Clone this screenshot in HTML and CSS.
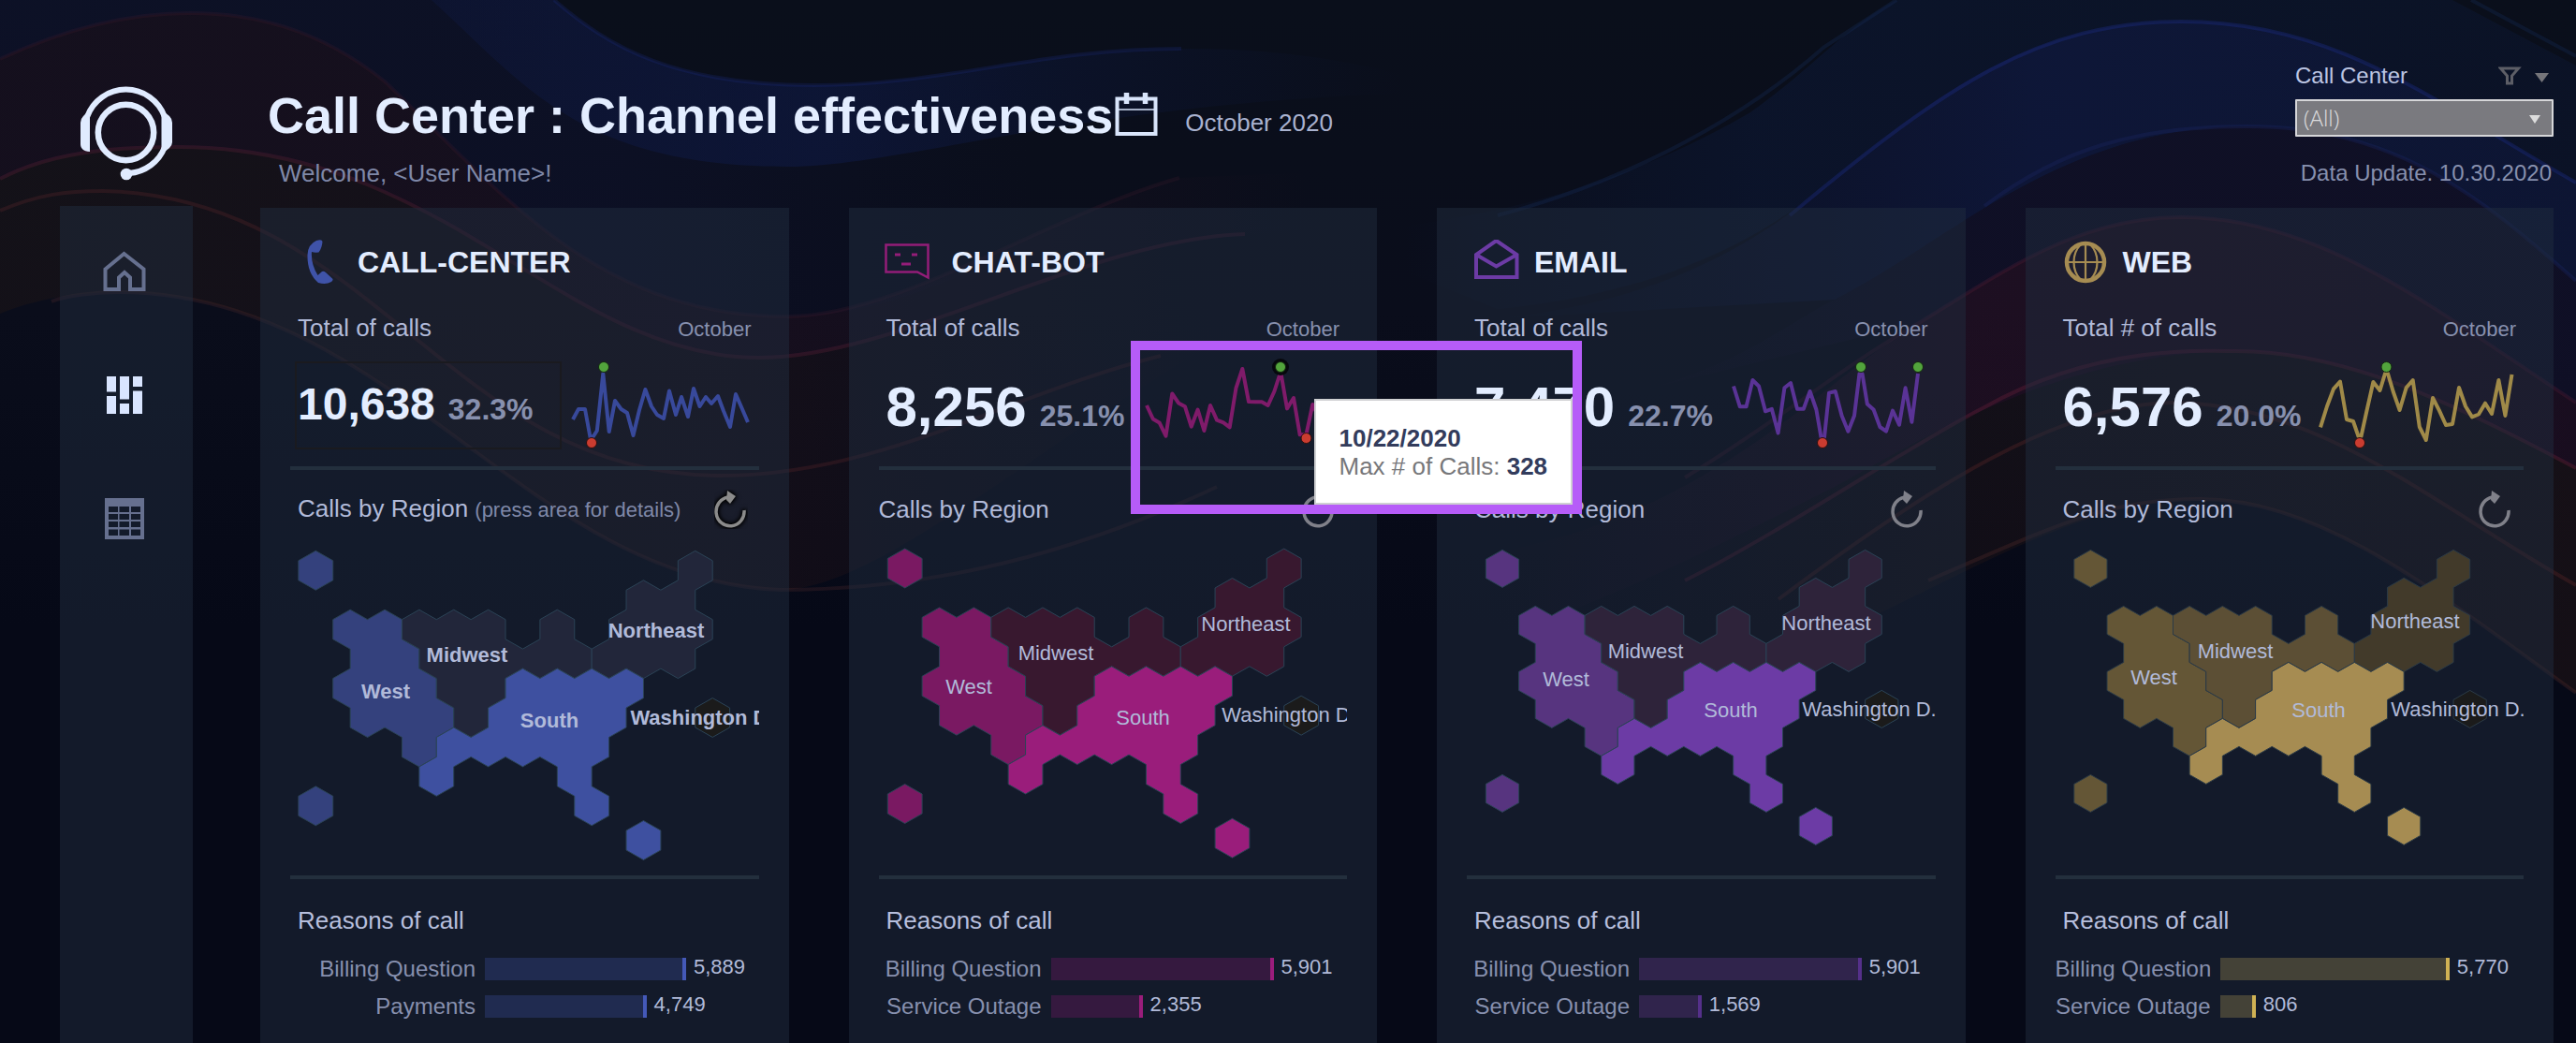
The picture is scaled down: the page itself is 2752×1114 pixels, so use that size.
FILE: index.html
```html
<!DOCTYPE html>
<html lang="en">
<head>
<meta charset="utf-8">
<title>Call Center : Channel effectiveness</title>
<link rel="stylesheet" href="styles.css">
</head>
<body>

<svg class="backdrop" viewBox="0 0 2752 1114" preserveAspectRatio="none" aria-hidden="true">
  <defs>
    <linearGradient id="fadeBlue" gradientUnits="userSpaceOnUse" x1="461" x2="1500" y1="0" y2="0"><stop offset="0" stop-color="#10205c" stop-opacity=".2"/><stop offset=".4" stop-color="#10205c" stop-opacity=".35"/><stop offset="1" stop-color="#10205c" stop-opacity="0"/></linearGradient>
    <linearGradient id="fadeNavy" gradientUnits="userSpaceOnUse" x1="1500" x2="2752" y1="0" y2="0"><stop offset="0" stop-color="#0d1c40" stop-opacity="0"/><stop offset=".3" stop-color="#0d1c40" stop-opacity=".4"/><stop offset="1" stop-color="#0d1c40" stop-opacity=".3"/></linearGradient>
    <linearGradient id="crest" gradientUnits="userSpaceOnUse" x1="1600" x2="2752" y1="0" y2="0"><stop offset="0" stop-color="#13235f" stop-opacity="0"/><stop offset=".5" stop-color="#13205a" stop-opacity=".45"/><stop offset="1" stop-color="#13235f" stop-opacity=".35"/></linearGradient>
    <linearGradient id="dusk" gradientUnits="userSpaceOnUse" x1="1700" x2="2752" y1="0" y2="0"><stop offset="0" stop-color="#151230" stop-opacity="0"/><stop offset=".4" stop-color="#151230" stop-opacity=".5"/><stop offset="1" stop-color="#151230" stop-opacity=".5"/></linearGradient>
    <linearGradient id="wineLeft" gradientUnits="userSpaceOnUse" x1="0" x2="1400" y1="0" y2="0"><stop offset="0" stop-color="#3a1426" stop-opacity=".22"/><stop offset=".6" stop-color="#3a1426" stop-opacity=".25"/><stop offset="1" stop-color="#3a1426" stop-opacity="0"/></linearGradient>
    <linearGradient id="wineRight" gradientUnits="userSpaceOnUse" x1="1600" x2="2752" y1="0" y2="0"><stop offset="0" stop-color="#4a1430" stop-opacity="0"/><stop offset=".45" stop-color="#4a1430" stop-opacity=".3"/><stop offset="1" stop-color="#4a1430" stop-opacity=".25"/></linearGradient>
    <linearGradient id="emberLeft" gradientUnits="userSpaceOnUse" x1="0" x2="1300" y1="0" y2="0"><stop offset="0" stop-color="#2a1a12" stop-opacity=".3"/><stop offset=".6" stop-color="#2a1518" stop-opacity=".35"/><stop offset="1" stop-color="#2a1518" stop-opacity="0"/></linearGradient>
    <linearGradient id="emberRight" gradientUnits="userSpaceOnUse" x1="1700" x2="2752" y1="0" y2="0"><stop offset="0" stop-color="#2a1814" stop-opacity="0"/><stop offset=".4" stop-color="#2a1814" stop-opacity=".3"/><stop offset="1" stop-color="#2a1814" stop-opacity=".4"/></linearGradient>
    <linearGradient id="depth" x1="0" y1="0" x2="0" y2="1"><stop offset="0" stop-color="#0a0f1b"/><stop offset=".3" stop-color="#0a0d1b"/><stop offset=".6" stop-color="#060917"/><stop offset="1" stop-color="#060917"/></linearGradient>
    <linearGradient id="veil" gradientUnits="userSpaceOnUse" x1="0" x2="1100" y1="0" y2="0"><stop offset="0" stop-color="#131640" stop-opacity=".3"/><stop offset=".6" stop-color="#131640" stop-opacity=".25"/><stop offset="1" stop-color="#131640" stop-opacity="0"/></linearGradient>
  </defs>
  <rect width="2752" height="1114" fill="url(#depth)"/>
  <path fill="url(#veil)" d="M0 0H592C650 50 720 91 870 91C960 91 1040 76 1100 66V260C1000 310 920 338 842 338C640 338 540 210 411 87C340 30 270 14 203 14C130 14 60 35 0 63Z"/>
  <path fill="url(#fadeBlue)" d="M461 0C560 90 620 178 842 178C960 178 1160 110 1500 100V80C1420 60 1350 52 1262 52C1110 52 1010 91 870 91C720 91 650 50 592 0Z"/>
  <path fill="url(#fadeNavy)" d="M1400 250C1600 240 1750 190 1870 120C1940 70 1970 30 2026 0H2620L2752 70V195C2600 110 2500 23 2330 23C2180 23 2080 90 1960 190C1900 240 1800 310 1600 330Z"/>
  <path fill="url(#crest)" d="M1600 340C1800 320 1900 240 1960 190C2080 90 2180 23 2330 23C2500 23 2600 110 2752 195V300C2650 210 2560 135 2400 135C2200 135 2080 260 1960 320Z"/>
  <path fill="url(#dusk)" d="M1700 430C1850 400 1900 350 1960 320C2080 260 2200 135 2400 135C2560 135 2650 210 2752 300V430C2600 330 2480 232 2330 232C2220 232 2140 290 2050 345Z"/>
  <path fill="url(#wineLeft)" d="M0 63C60 35 130 14 203 14C270 14 340 30 411 87C540 210 640 338 842 338C960 338 1120 230 1260 190L1500 180V258C1440 252 1380 250 1330 250C1160 256 960 382 812 382C600 382 480 157 190 157C110 157 50 165 0 191Z"/>
  <path fill="url(#emberLeft)" d="M0 191C50 165 110 157 190 157C480 157 600 382 812 382C960 382 1160 256 1330 250L1400 320C1200 390 960 630 834 630C560 620 420 312 126 312C90 312 40 318 0 335Z"/>
  <path fill="url(#wineRight)" d="M1500 600C1800 590 1950 400 2050 345C2140 290 2220 232 2330 232C2480 232 2600 330 2752 430V500C2620 430 2500 372 2380 375C2200 380 2050 470 1960 520C1800 600 1650 680 1500 700Z"/>
  <path fill="url(#emberRight)" d="M1500 700C1650 680 1800 600 1960 520C2050 470 2200 380 2380 375C2500 372 2620 430 2752 500V740C2600 630 2480 533 2350 533C2200 533 2050 650 1900 700Z"/>
  <g class="ridges">
    <path d="M592 0C650 50 720 91 870 91C1010 91 1110 52 1262 52" stroke="#1a2c80" stroke-opacity=".25"/>
    <path d="M1600 230C1750 190 1870 120 1949 50L2026 0M2640 0L2752 60" stroke="#17305c" stroke-opacity=".3"/>
    <path d="M1912 230C2080 90 2180 23 2330 23C2500 23 2600 110 2752 195" stroke="#1d2f8c" stroke-opacity=".35"/>
    <path d="M2120 220C2200 160 2280 135 2400 135C2560 135 2650 210 2752 300" stroke="#1b2560" stroke-opacity=".35"/>
    <path d="M0 63C60 35 130 14 203 14C270 14 340 30 411 87C540 210 640 338 842 338C960 338 1120 230 1260 190" stroke="#4a1c34" stroke-opacity=".2"/>
    <path d="M0 191C50 165 110 157 190 157C480 157 600 382 812 382C960 382 1160 256 1330 250" stroke="#5a2036" stroke-opacity=".35"/>
    <path d="M0 225C40 208 70 204 110 204C400 210 480 508 770 508C940 508 1080 420 1240 380" stroke="#6a2c30" stroke-opacity=".25"/>
    <path d="M55 322C70 316 100 312 126 312C420 312 560 620 834 630C1000 630 1150 590 1300 520" stroke="#5a3030" stroke-opacity=".25"/>
    <path d="M1800 510C1900 450 1970 390 2050 345C2140 290 2220 232 2330 232C2480 232 2600 330 2752 430" stroke="#64203c" stroke-opacity=".25"/>
    <path d="M1800 620C1900 570 2050 470 2120 435C2200 390 2290 372 2380 375C2500 372 2620 430 2752 500" stroke="#7a2440" stroke-opacity=".3"/>
    <path d="M1900 640C2060 520 2200 432 2320 430C2480 430 2600 540 2752 625" stroke="#6a2c2c" stroke-opacity=".3"/>
    <path d="M2060 620C2200 560 2250 533 2350 533C2480 533 2600 630 2752 740" stroke="#5a302c" stroke-opacity=".3"/>
  </g>
</svg>

<!-- Region outlines, drawn on a grid of half-hexagon columns and third-of-row steps -->
<svg class="defs" aria-hidden="true">
  <defs>
    <path id="hex" vector-effect="non-scaling-stroke" d="M0-2L1-1V1L0 2L-1 1V-1Z"/>
    <path id="west" vector-effect="non-scaling-stroke" d="M1 5L2 4L3 5L4 4L5 5V7L6 8V10L7 11V13L8 14V16L7 17V19L6 20L5 19V17L4 16L3 17L2 16V14L1 13V11L2 10V8L1 7ZM0-2L1-1V1L0 2L-1 1V-1ZM0 22L1 23V25L0 26L-1 25V23Z"/>
    <path id="midwest" vector-effect="non-scaling-stroke" d="M5 5L6 4L7 5L8 4L9 5L10 4L11 5V7L12 8L13 7V5L14 4L15 5V7L16 8V10L15 11L14 10L13 11L12 10L11 11V13L10 14V16L9 17L8 16V14L7 13V11L6 10V8L5 7Z"/>
    <path id="northeast" vector-effect="non-scaling-stroke" d="M21-1L22-2L23-1V1L22 2V4L23 5V7L22 8V10L21 11L20 10L19 11L18 10L17 11L16 10V8L17 7V5L18 4V2L19 1L20 2L21 1Z"/>
    <path id="south" vector-effect="non-scaling-stroke" d="M11 11L12 10L13 11L14 10L15 11L16 10L17 11L18 10L19 11V13L18 14V16L17 17V19L16 20V22L17 23V25L16 26L15 25V23L14 22V20L13 19L12 20L11 19L10 20L9 19L8 20V22L7 23L6 22V20L7 19V17L8 16L9 17L10 16V14L11 13ZM19 25.5L20 26.5V28.5L19 29.5L18 28.5V26.5Z"/>
    <g id="reload">
      <path d="M15 8A15 15.500 0 1 0 32 22" fill="none" stroke-width="3.500"/>
      <path d="M14 1L23 7L17 15L13 11Z" stroke="none"/>
    </g>
  </defs>
</svg>

<div class="app">
  <header class="topbar">
    <a class="logo" href="#" aria-label="Home page">
      <svg width="120" height="120" viewBox="0 0 120 120" fill="none" stroke="#e0ebff">
        <circle cx="59.500" cy="56.500" r="29.700" stroke-width="6.500"/>
        <path d="M18 40A44 44 0 0 1 101 40M101 72A44 44 0 0 1 63 100" stroke-width="6"/>
        <path d="M21 37V77C14 77 11 73 11 69V46Q11 42 14 39L18 35ZM97.500 37L101 35L106 39Q109 42 109 46V67Q109 70 106 73L101 77L97.500 74Z" fill="#e0ebff" stroke="none"/>
        <circle cx="60" cy="101" r="6.300" fill="#e0ebff" stroke="none"/>
      </svg>
    </a>
    <div class="heading">
      <div class="title-line">
        <h1>Call Center : Channel effectiveness</h1>
        <svg class="calendar" width="46" height="48" viewBox="0 0 46 48" fill="none" stroke="#d9e5fb"><path d="M2.500 6.500H43.500V44H2.500Z" stroke-width="4"/><path d="M1 18H45" stroke-width="1.500"/><path d="M12.500 0V12M32.500 0V12" stroke-width="5.500"/></svg>
        <span class="period">October 2020</span>
      </div>
      <p class="welcome">Welcome, &lt;User Name&gt;!</p>
    </div>
    <div class="filter">
      <div class="filter-head">
        <label for="center">Call Center</label>
        <svg width="54" height="20" viewBox="0 0 54 20"><path d="M2.500 2H21.500L14.500 10V18H9.500V10Z" fill="none" stroke="#5d5e66" stroke-width="3"/><path d="M39 7H54L46.500 17Z" fill="#75757a"/></svg>
      </div>
      <div class="select">
        <select id="center"><option>(All)</option></select>
        <svg width="12" height="9" viewBox="0 0 12 9"><path d="M0 0H12L6 9Z" fill="#dcdcdc"/></svg>
      </div>
      <p class="updated">Data Update. 10.30.2020</p>
    </div>
  </header>

  <nav class="sidebar" aria-label="Views">
    <a href="#" aria-label="Home"><svg width="46" height="44" viewBox="0 0 46 44"><path d="M2.500 19.500L22.500 3L43.500 19.500V41H29V28.500L23 23L17 28.500V41H2.500Z" fill="none" stroke="#66708f" stroke-width="4"/></svg></a>
    <a href="#" aria-label="Channels"><svg width="40" height="40" viewBox="0 0 40 40" fill="#d9e5ff"><path d="M1 0H11V16.500H1ZM1 21H11V40H1ZM15 0H25V24.500H15ZM15 29H25V40H15ZM29 0H39V11H29ZM29 15.500H39V40H29Z"/></svg></a>
    <a href="#" aria-label="Table"><svg width="42" height="44" viewBox="0 0 42 44"><path fill="#66708f" fill-rule="evenodd" d="M0 0H42V44H0ZM4 9V15H14V9ZM15.500 9V15H26V9ZM28 9V15H38V9ZM4 17V23H14V17ZM15.500 17V23H26V17ZM28 17V23H38V17ZM4 25V31H14V25ZM15.500 25V31H26V25ZM28 25V31H38V25ZM4 33.500V40H14V33.500ZM15.500 33.500V40H26V33.500ZM28 33.500V40H38V33.500Z"/></svg></a>
  </nav>

  <main class="cards">
    <section class="card phone">
      <div class="card-head">
        <span class="icon"><svg width="28" height="48" viewBox="0 0 28 48" fill="#3f53a8"><path d="M10 1Q16-1 16.500 2Q16 9 12.500 13.500Q8 14 5 13Q4 26 11.500 38L16 34Q18 33 20 35L27 41.500Q28.500 43 26 45Q20 48.500 12 46Q0 36 .5 16Q1 5 10 1Z"/></svg></span>
        <h2>CALL-CENTER</h2>
      </div>
      <div class="total"><span>Total of calls</span><span class="month">October</span></div>
      <div class="kpi">
        <div class="figures framed"><strong>10,638</strong><b>32.3%</b></div>
        <svg class="spark" width="208" height="110" viewBox="12 0 208 110">
          <polyline points="21,68 27,57 34,57 39.500,87 43,86 46.800,80 53.300,19 59.700,81 66,48 72.600,57 79,61 85.500,85 92,58 98.400,36 105,54 111,63 118,67 124,37.500 131,63 137,44 144,65 150,35 156.500,54 163,44 169,51 176,43 182,59 189,76 195,41 202,57 208,71"/>
          <circle class="max" cx="54" cy="12" r="5.500"/><circle class="min" cx="41" cy="93" r="5.500"/>
        </svg>
      </div>
      <hr>
      <div class="region-head"><h3>Calls by Region <small>(press area for details)</small></h3>
        <button class="strong" aria-label="Reset"><svg width="36" height="42" viewBox="0 0 36 42"><use href="#reload" class="halo"/><use href="#reload"/></svg></button></div>
      <svg class="map" height="370">
        <g transform="translate(27.300 44.300) scale(18.430 10.480)">
          <use class="r-west" href="#west"/><use class="r-mid" href="#midwest"/><use class="r-ne" href="#northeast"/><use class="r-south" href="#south"/><use class="r-dc" href="#hex" x="23" y="15"/>
        </g>
        <text x="391" y="116">Northeast</text><text x="189" y="142">Midwest</text><text x="102" y="181">West</text><text x="277" y="212">South</text><text x="451" y="209">Washington D.C.</text>
      </svg>
      <hr>
      <h3 class="reasons-title">Reasons of call</h3>
      <ul class="reasons">
        <li><span class="name">Billing Question</span><span class="track"><i style="width:73.5%"></i><em>5,889</em></span></li>
        <li><span class="name">Payments</span><span class="track"><i style="width:59%"></i><em>4,749</em></span></li>
      </ul>
    </section>

    <section class="card bot">
      <div class="card-head">
        <span class="icon"><svg width="52" height="50" viewBox="0 0 52 50" fill="none" stroke="#931d78"><path d="M1.500 6.500H46.500V41.500L35 35.500H1.500Z" stroke-width="2.500"/><path d="M11 17H17M29 17H35M18 27H28" stroke-width="3"/></svg></span>
        <h2>CHAT-BOT</h2>
      </div>
      <div class="total"><span>Total of calls</span><span class="month">October</span></div>
      <div class="kpi">
        <div class="figures"><strong>8,256</strong><b>25.1%</b></div>
        <svg class="spark" width="220" height="110" viewBox="0 0 220 110">
          <polyline points="6,53 12.800,67.500 19.600,71.400 26.500,85.700 33.300,40.400 40,50.400 47,54.300 53.700,75.700 60.600,57.500 67.400,80 74,53 81,68.600 88,71.400 94.700,76.400 101.500,34.300 108.300,14 115,49 122,49.300 129,49.300 135.600,53 142.400,38 149.200,17 156,56.400 163,45 169.700,84.300 176.500,84 183.300,52 190,66 197,48 204,60"/>
          <circle cx="149" cy="12" r="9" fill="#06080d"/><circle class="max" cx="149" cy="12" r="5.500"/><circle class="min" cx="176.500" cy="88" r="5.500"/>
        </svg>
      </div>
      <hr>
      <div class="region-head flush"><h3>Calls by Region</h3>
        <button aria-label="Reset"><svg width="36" height="42" viewBox="0 0 36 42"><use href="#reload"/></svg></button></div>
      <svg class="map" height="370">
        <g transform="translate(27.700 42) scale(18.410 10.480)">
          <use class="r-west" href="#west"/><use class="r-mid" href="#midwest"/><use class="r-ne" href="#northeast"/><use class="r-south" href="#south"/><use class="r-dc" href="#hex" x="23" y="15"/>
        </g>
        <text x="392" y="109">Northeast</text><text x="189" y="140">Midwest</text><text x="96" y="176">West</text><text x="282" y="209">South</text><text x="449" y="206">Washington D.C.</text>
      </svg>
      <hr>
      <h3 class="reasons-title">Reasons of call</h3>
      <ul class="reasons">
        <li><span class="name">Billing Question</span><span class="track"><i style="width:75.2%"></i><em>5,901</em></span></li>
        <li><span class="name">Service Outage</span><span class="track"><i style="width:31%"></i><em>2,355</em></span></li>
      </ul>
      <div class="callout" role="tooltip">
        <p><b>10/22/2020</b><br>Max # of Calls: <b>328</b></p>
      </div>
    </section>

    <section class="card mail">
      <div class="card-head">
        <span class="icon"><svg width="50" height="48" viewBox="0 0 50 48" fill="none" stroke="#6c3ba5" stroke-width="4"><path d="M3 16V40H46.500V16L24.500 1Z"/><path d="M3 16L24.500 28.500L46.500 16"/></svg></span>
        <h2>EMAIL</h2>
      </div>
      <div class="total"><span>Total of calls</span><span class="month">October</span></div>
      <div class="kpi">
        <div class="figures"><strong>7,470</strong><b>22.7%</b></div>
        <svg class="spark" width="220" height="110" viewBox="0 0 220 110">
          <polyline points="4,32.500 10.800,54.300 17.600,54.300 24.400,26 31,32.500 38,59.300 44.800,56.800 51.600,82.500 58.400,34.300 65,29 72,56.800 78.800,56.800 85.600,38 92.400,57.500 97.500,87 101,87 106,39.600 112.800,38 119.600,64 126.400,80.700 133,64 138.500,19 141.500,19 146.800,51.400 153.600,57.500 160.400,76 167,80.700 174,58.600 181,73.600 187.600,34.300 194.400,70.700 201,19"/>
          <circle class="max" cx="140" cy="12" r="5.500"/><circle class="max" cx="201" cy="12" r="5.500"/><circle class="min" cx="99" cy="93" r="5.500"/>
        </svg>
      </div>
      <hr>
      <div class="region-head"><h3>Calls by Region</h3>
        <button aria-label="Reset"><svg width="36" height="42" viewBox="0 0 36 42"><use href="#reload"/></svg></button></div>
      <svg class="map" height="370">
        <g transform="translate(38 42.400) scale(17.620 10)">
          <use class="r-west" href="#west"/><use class="r-mid" href="#midwest"/><use class="r-ne" href="#northeast"/><use class="r-south" href="#south"/><use class="r-dc" href="#hex" x="23" y="15"/>
        </g>
        <text x="384" y="108">Northeast</text><text x="191" y="138">Midwest</text><text x="106" y="168">West</text><text x="282" y="201">South</text><text x="441" y="200">Washington D.C.</text>
      </svg>
      <hr>
      <h3 class="reasons-title">Reasons of call</h3>
      <ul class="reasons">
        <li><span class="name">Billing Question</span><span class="track"><i style="width:75.1%"></i><em>5,901</em></span></li>
        <li><span class="name">Service Outage</span><span class="track"><i style="width:21.1%"></i><em>1,569</em></span></li>
      </ul>
    </section>

    <section class="card web">
      <div class="card-head">
        <span class="icon"><svg width="46" height="46" viewBox="0 0 46 46" fill="none" stroke="#a68c52"><circle cx="23" cy="23" r="20" stroke-width="4.500"/><path d="M23 3V43M3 23H43M18 4C8 14 8 32 18 42M28 4C38 14 38 32 28 42" stroke-width="2.200"/></svg></span>
        <h2>WEB</h2>
      </div>
      <div class="total"><span>Total # of calls</span><span class="month">October</span></div>
      <div class="kpi">
        <div class="figures"><strong>6,576</strong><b>20.0%</b></div>
        <svg class="spark" width="220" height="110" viewBox="0 0 220 110">
          <polyline points="3,76.400 10,54 17,35.400 24,27.500 31,68 38,70 43.500,86 46.500,86 52.400,59 59.400,28 66.500,37 72,19 75,19 80.600,38 87.600,58 94.700,34 101.700,26 108.800,76 115.800,90 123,45 130,58.600 137,74 144,73 151,34 158,54 165,65.400 172,62.500 179,50.700 186,62 193.400,26 200.400,64 207.500,20"/>
          <circle class="max" cx="73.500" cy="12" r="5.500"/><circle class="min" cx="45" cy="93" r="5.500"/>
        </svg>
      </div>
      <hr>
      <div class="region-head"><h3>Calls by Region</h3>
        <button aria-label="Reset"><svg width="36" height="42" viewBox="0 0 36 42"><use href="#reload"/></svg></button></div>
      <svg class="map" height="370">
        <g transform="translate(37.400 42.400) scale(17.620 10)">
          <use class="r-west" href="#west"/><use class="r-mid" href="#midwest"/><use class="r-ne" href="#northeast"/><use class="r-south" href="#south"/><use class="r-dc" href="#hex" x="23" y="15"/>
        </g>
        <text x="384" y="106">Northeast</text><text x="192" y="138">Midwest</text><text x="105" y="166">West</text><text x="281" y="201">South</text><text x="441" y="200">Washington D.C.</text>
      </svg>
      <hr>
      <h3 class="reasons-title">Reasons of call</h3>
      <ul class="reasons">
        <li><span class="name">Billing Question</span><span class="track"><i style="width:75.6%"></i><em>5,770</em></span></li>
        <li><span class="name">Service Outage</span><span class="track"><i style="width:11.8%"></i><em>806</em></span></li>
      </ul>
    </section>
  </main>
</div>
</body>
</html>
```
FILE: styles.css
```css
* { box-sizing: border-box; }

body {
  margin: 0;
  background: #060917;
  color: #b1bad9;
  font: 26px/30px "Liberation Sans", Arial, sans-serif;
}

h1, h2, h3, p, ul { margin: 0; padding: 0; }
svg { display: block; flex: none; }

.backdrop {
  position: absolute;
  inset: 0;
  width: 100%;
  height: 100%;
  z-index: -1;
}
.ridges { fill: none; stroke-width: 4; }
.defs { position: absolute; width: 0; height: 0; }

.app {
  display: grid;
  grid-template-columns: 142px 1fr;
  grid-template-rows: 220px 1fr;
  column-gap: 72px;
  min-height: 100vh;
  padding: 0 24px 0 64px;
}

/* Top bar */
.topbar {
  grid-column: 1 / -1;
  display: flex;
  align-items: flex-start;
  padding-top: 67px;
}
.logo {
  width: 142px;
  margin: 18px 72px 0 0;
  display: flex;
  justify-content: center;
}
.heading { flex: 1; padding: 25px 0 0 8px; }
.title-line { display: flex; align-items: center; }
h1 {
  font-size: 54px;
  line-height: 62px;
  color: #e3edff;
}
.calendar { margin-left: 2px; }
.period { margin-left: 29px; padding-top: 16px; color: #a9b2cf; }
.welcome { margin-top: 16px; padding-left: 12px; color: #7f88a8; }

.filter { width: 276px; font-size: 24px; line-height: 28px; }
.filter-head {
  display: flex;
  justify-content: space-between;
  align-items: center;
  padding-right: 5px;
  color: #bcc5e2;
}
.select { position: relative; margin-top: 11px; }
.select select {
  display: block;
  width: 100%;
  height: 40px;
  padding: 0 7px;
  appearance: none;
  border: 2px solid #d6d6d8;
  border-radius: 1px;
  background: #7a7a7f;
  color: #dcdcde;
  font: 300 24px/28px "Open Sans", sans-serif;
}
.select svg { position: absolute; right: 14px; top: 17px; pointer-events: none; }
.updated { margin-top: 25px; padding-right: 2px; text-align: right; color: #8790ae; }

/* Sidebar */
.sidebar {
  display: flex;
  flex-direction: column;
  align-items: center;
  gap: 84px;
  padding: 46px 4px 0 0;
  background: rgba(32, 44, 62, .5);
}
.sidebar a {
  display: flex;
  align-items: center;
  justify-content: center;
  width: 48px;
  height: 48px;
}

/* Channel cards */
.cards {
  display: grid;
  grid-template-columns: repeat(4, 1fr);
  gap: 64px;
  padding-top: 2px;
}
.card {
  position: relative;
  min-width: 0;
  padding: 34px 32px 28px;
  background: rgba(32, 44, 62, .5);
}
.card-head { display: flex; align-items: center; gap: 12px; height: 48px; }
.bot .card-head { gap: 18px; }
.icon { display: flex; justify-content: center; width: 56px; margin-left: 4px; }
h2 { font-size: 32px; line-height: 36px; color: #e3edff; }

.total {
  display: flex;
  justify-content: space-between;
  align-items: baseline;
  height: 30px;
  margin-top: 31px;
  padding: 0 8px;
}
.month { font-size: 22px; color: #8790ae; }

.kpi { display: flex; justify-content: space-between; margin: 15px 0 8px; }
.figures {
  display: flex;
  align-items: baseline;
  gap: 14px;
  padding: 21px 0 0 8px;
  line-height: 68px;
}
.figures strong { font-size: 60px; color: #e3edff; }
.figures b { font-size: 32px; color: #8790ae; }
.framed {
  width: 285px;
  height: 94px;
  margin: 6px 0 0 5px;
  padding: 10px 0 0 1px;
  border: 2px solid #1a1a1f;
}
.framed strong { font-size: 48px; }

.spark polyline { fill: none; stroke: var(--line); stroke-width: 4; stroke-linejoin: round; }
.max { fill: #52a43c; stroke: #14250f; stroke-width: 1; }
.min { fill: #ca3c30; stroke: #2c0f0f; stroke-width: 1; }

hr { height: 4px; margin: 0; border: 0; background: #232f3d; }

.region-head {
  display: flex;
  justify-content: space-between;
  align-items: center;
  height: 42px;
  margin-top: 21px;
  padding: 0 12px 0 8px;
}
.flush { padding-left: 0; }
h3 { font-size: 26px; line-height: 30px; font-weight: 400; }
small { font-size: 22px; color: #7f88a8; }
button { padding: 0; border: 0; background: none; }
button use { stroke: #80818a; fill: #80818a; }
.strong use { stroke: #8b8b8b; fill: #8b8b8b; }
.strong .halo { stroke: #000; fill: #000; filter: drop-shadow(0 0 2px #000) drop-shadow(0 0 2px #000); }

.map { width: 100%; overflow: hidden; }
.map use { stroke: #2b4356; stroke-width: 1; }
.map text { font-size: 22px; text-anchor: middle; fill: #b1bad9; }
.phone .map text { font-weight: 700; }
.r-west { fill: var(--west); }
.r-mid { fill: var(--mid); }
.r-ne { fill: var(--ne); }
.r-south { fill: var(--south); }
.r-dc { fill: #1b1b1b; }

.reasons-title { margin-top: 29px; padding-left: 8px; color: #b7bfdd; }
.reasons {
  display: grid;
  gap: 16px;
  margin-top: 25px;
  list-style: none;
  line-height: 24px;
}
.reasons li { display: grid; grid-template-columns: var(--label) 1fr; gap: 10px; }
.name { font-size: 24px; text-align: right; white-space: nowrap; color: #8790ae; }
.track { display: flex; align-items: flex-start; gap: 8px; }
.track i { height: 24px; background: var(--bar); border-right: 4px solid var(--tick); }
.track em { font-size: 22px; line-height: 20px; font-style: normal; }

.phone { --line: #38499b; --west: #34417d; --mid: #22263a; --ne: #22263a; --south: #3e50a0; --bar: #202b50; --tick: #4459b8; --label: 198px; }
.bot { --line: #7f1b6a; --west: #7a1962; --mid: #38182f; --ne: #38182f; --south: #9a1d7b; --bar: #35193f; --tick: #9a1d7b; --label: 174px; }
.mail { --line: #5a3396; --west: #57347f; --mid: #2e233a; --ne: #2e233a; --south: #6c3ba5; --bar: #30244c; --tick: #55308a; --label: 174px; }
.web { --line: #a08a48; --west: #645636; --mid: #5c4f35; --ne: #423a2a; --south: #a68c52; --bar: #444237; --tick: #d0b254; --label: 166px; }
.web .map use { stroke: #2b3a46; }

/* Tooltip over the chat-bot sparkline, with its highlight frame */
.callout {
  position: absolute;
  z-index: 2;
  top: 142px;
  left: 301px;
  width: 482px;
  height: 185px;
  padding: 52px 0 0 186px;
  border: 10px solid #b65cf8;
}
.callout p {
  height: 113px;
  padding: 25px 0 0 25px;
  border: 2px solid #cfd0d2;
  background: #fff;
  color: #77777a;
  line-height: 30px;
  white-space: nowrap;
}
.callout b { color: #333c5c; }
```
